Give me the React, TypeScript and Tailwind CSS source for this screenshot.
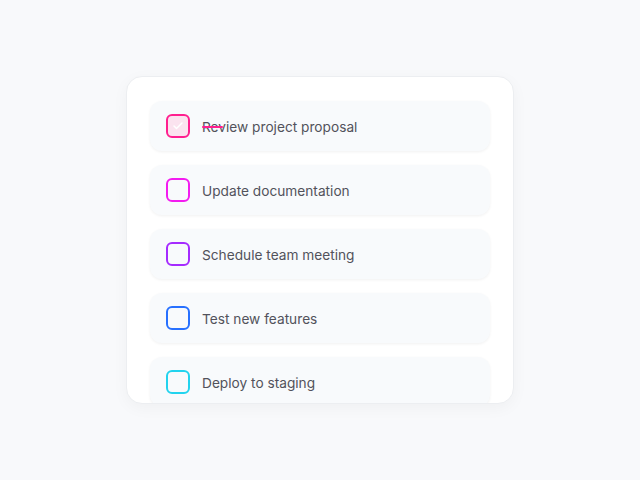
import React from "react";

const items = [
  { label: "Review project proposal", color: "#ff1f8f", done: true },
  { label: "Update documentation", color: "#f31cf0", done: false },
  { label: "Schedule team meeting", color: "#a52bff", done: false },
  { label: "Test new features", color: "#2770ff", done: false },
  { label: "Deploy to staging", color: "#22d3ee", done: false },
];

export default function App() {
  return (
    <div className="w-[640px] h-[480px] bg-[#f8f9fb] flex items-center justify-center" style={{ fontFamily: "Inter, 'Noto Sans', sans-serif" }}>
      <div className="w-[388px] h-[328px] bg-white rounded-[16px] border border-[#eceef1] shadow-[0_4px_16px_rgba(0,0,0,0.04)] overflow-hidden px-[23px] pt-[24px] flex flex-col gap-[14px]">
        {items.map((it) => (
          <div key={it.label} className="h-[50px] shrink-0 rounded-[12px] bg-[#f8fafc] shadow-[0_1px_3px_rgba(0,0,0,0.06)] flex items-center px-4 gap-3">
            <div
              className="w-6 h-6 rounded-[6px] border-2 flex items-center justify-center shrink-0"
              style={{ borderColor: it.color, backgroundColor: it.done ? "#fbe3ef" : "transparent" }}
            >
              {it.done && (
                <svg width="12" height="12" viewBox="0 0 24 24" fill="none" stroke="#ffffff" strokeWidth="3" strokeLinecap="round" strokeLinejoin="round">
                  <polyline points="20 6 9 17 4 12" />
                </svg>
              )}
            </div>
            <div className="relative text-[13.7px] text-[#52525b] leading-5 pt-[2px]">
              {it.label}
              {it.done && (
                <span className="absolute left-0 top-[11px] w-[21px] h-[2px] rounded-full bg-[#ff1f8f]" />
              )}
            </div>
          </div>
        ))}
      </div>
    </div>
  );
}
